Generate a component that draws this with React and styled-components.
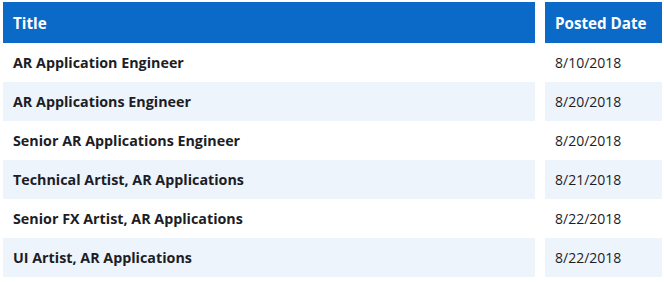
import React from 'react'
import styled, { createGlobalStyle } from 'styled-components'

const GlobalStyle = createGlobalStyle`
  body {
    margin: 0;
    background: #fff;
    font-family: 'Open Sans', 'Noto Sans', sans-serif;
  }
`

const Table = styled.div`
  display: flex;
  flex-direction: column;
  padding: 2px 2px 0 3px;
`

const Row = styled.div`
  display: grid;
  grid-template-columns: 532px 117px;
  column-gap: 10px;
  height: ${({ head }) => (head ? '41px' : '39px')};
`

const Cell = styled.div`
  display: flex;
  align-items: center;
  padding: 0 10px;
  font-size: ${({ head, bold }) => (head ? '15.2px' : bold ? '14.3px' : '14px')};
  font-weight: ${({ bold }) => (bold ? 700 : 400)};
  color: ${({ head }) => (head ? '#fff' : '#1d1d26')};
  background: ${({ head, striped }) =>
    head ? '#0b69c7' : striped ? '#edf4fb' : '#fff'};
  white-space: nowrap;
`

const jobs = [
  ['AR Application Engineer', '8/10/2018'],
  ['AR Applications Engineer', '8/20/2018'],
  ['Senior AR Applications Engineer', '8/20/2018'],
  ['Technical Artist, AR Applications', '8/21/2018'],
  ['Senior FX Artist, AR Applications', '8/22/2018'],
  ['UI Artist, AR Applications', '8/22/2018'],
]

export default function App() {
  return (
    <>
      <GlobalStyle />
      <Table>
        <Row head>
          <Cell head bold>Title</Cell>
          <Cell head bold>Posted Date</Cell>
        </Row>
        {jobs.map(([title, date], i) => (
          <Row key={title}>
            <Cell bold striped={i % 2 === 1}>{title}</Cell>
            <Cell striped={i % 2 === 1}>{date}</Cell>
          </Row>
        ))}
      </Table>
    </>
  )
}
